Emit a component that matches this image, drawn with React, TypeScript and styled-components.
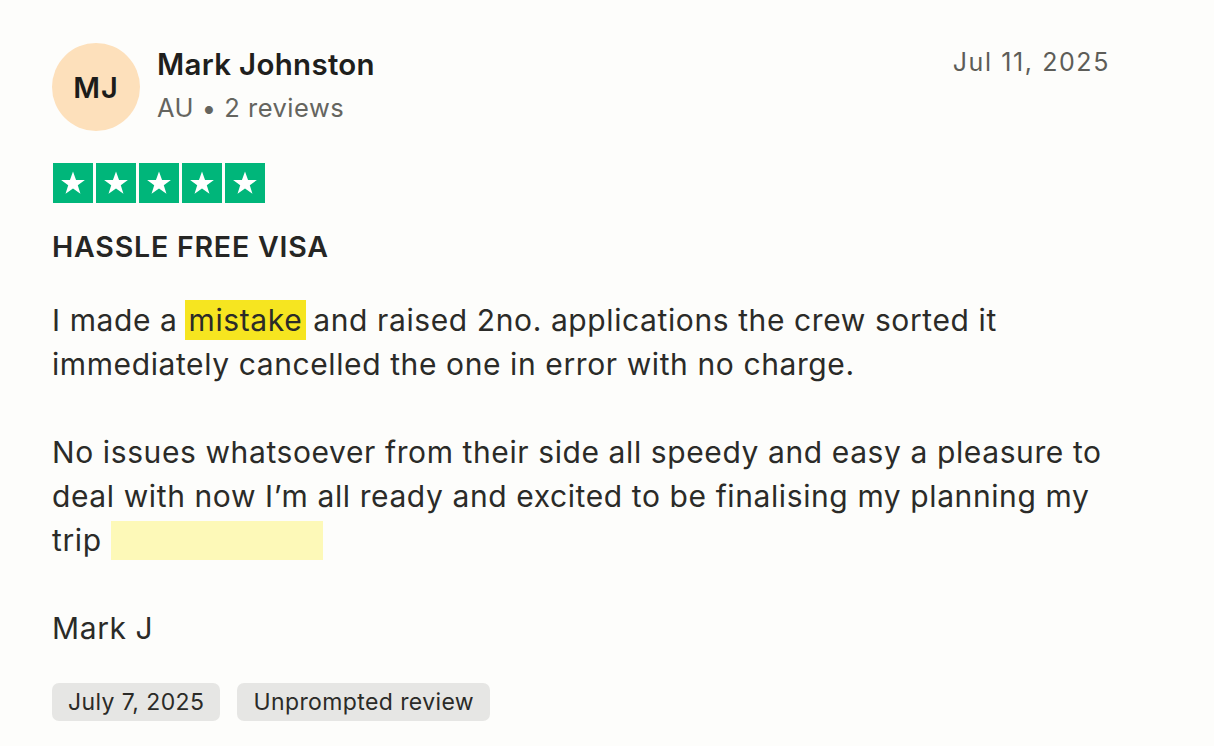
import React from "react";
import { styled, createGlobalStyle } from "styled-components";

const GlobalStyle = createGlobalStyle`
  html, body {
    margin: 0;
    padding: 0;
    background: #fdfdfb;
  }
  body {
    font-family: Inter, "Noto Sans", "Liberation Sans", sans-serif;
    color: #2b2b28;
  }
`;

const Card = styled.article`
  width: 1214px;
  height: 746px;
  box-sizing: border-box;
  padding: 43px 104px 0 52px;
  background: #fdfdfb;
`;

const Header = styled.header`
  display: flex;
  align-items: flex-start;
`;

const Avatar = styled.div`
  width: 88px;
  height: 88px;
  border-radius: 50%;
  background: #fde0bb;
  color: #1c1c1a;
  display: flex;
  align-items: center;
  justify-content: center;
  font-size: 29px;
  font-weight: 600;
  letter-spacing: 1px;
  flex-shrink: 0;
`;

const Who = styled.div`
  margin-left: 17px;
  display: flex;
  flex-direction: column;
  flex: 1;
  padding-top: 1px;
`;

const Name = styled.div`
  font-size: 29.5px;
  font-weight: 600;
  line-height: 40px;
  letter-spacing: 0.3px;
  color: #1f1f1d;
`;

const Meta = styled.div`
  font-size: 25.5px;
  line-height: 48px;
  letter-spacing: 0.5px;
  color: #65655f;
`;

const Posted = styled.time`
  font-size: 25px;
  line-height: 38px;
  color: #5d5d58;
  letter-spacing: 1.6px;
`;

const Stars = styled.div`
  display: flex;
  gap: 3px;
  margin: 31px 0 0 1px;
`;

const StarBox = styled.span`
  width: 40px;
  height: 40px;
  background: #00b67a;
  display: flex;
  align-items: center;
  justify-content: center;
`;

const Title = styled.h2`
  margin: 24px 0 0;
  font-size: 28.5px;
  font-weight: 600;
  line-height: 40px;
  letter-spacing: 0.8px;
  color: #262624;
`;

const Body = styled.p`
  margin: 31px 0 0;
  font-size: 30px;
  line-height: 44px;
  letter-spacing: 0.6px;
  white-space: pre-line;
  color: #2b2b28;
`;

const Mark = styled.mark<{ $soft?: boolean }>`
  background: ${(p) => (p.$soft ? "#fdf9b8" : "#f6e520")};
  color: inherit;
  padding: 2px 4px;
  margin: 0 -2px;
  ${(p) => (p.$soft ? "display: inline-block; width: 204px; height: 35px; vertical-align: -9px; margin: 0;" : "")}
`;

const Tags = styled.div`
  display: flex;
  gap: 17px;
  margin-top: 33px;
`;

const Tag = styled.span`
  background: #e6e6e4;
  border-radius: 7px;
  height: 38px;
  padding: 0 16px;
  display: inline-flex;
  align-items: center;
  font-size: 23px;
  letter-spacing: 0.4px;
  color: #2b2b28;
`;

const Star = () => (
  <svg width="28" height="28" viewBox="0 0 24 24">
    <path
      d="M12 2.2l2.6 7.2h7.6l-6.1 4.5 2.3 7.3L12 16.7l-6.4 4.5 2.3-7.3L1.8 9.4h7.6z"
      fill="#fff"
    />
  </svg>
);

export default function App() {
  return (
    <>
      <GlobalStyle />
      <Card>
        <Header>
          <Avatar>MJ</Avatar>
          <Who>
            <Name>Mark Johnston</Name>
            <Meta>AU • 2 reviews</Meta>
          </Who>
          <Posted>Jul 11, 2025</Posted>
        </Header>
        <Stars>
          {[0, 1, 2, 3, 4].map((i) => (
            <StarBox key={i}>
              <Star />
            </StarBox>
          ))}
        </Stars>
        <Title>HASSLE FREE VISA</Title>
        <Body>
          I made a <Mark>mistake</Mark> and raised 2no. applications the crew sorted it
          {"\n"}immediately cancelled the one in error with no charge.
          {"\n\n"}No issues whatsoever from their side all speedy and easy a pleasure to
          {"\n"}deal with now I’m all ready and excited to be finalising my planning my
          {"\n"}trip <Mark $soft />
          {"\n\n"}Mark J
        </Body>
        <Tags>
          <Tag>July 7, 2025</Tag>
          <Tag>Unprompted review</Tag>
        </Tags>
      </Card>
    </>
  );
}
